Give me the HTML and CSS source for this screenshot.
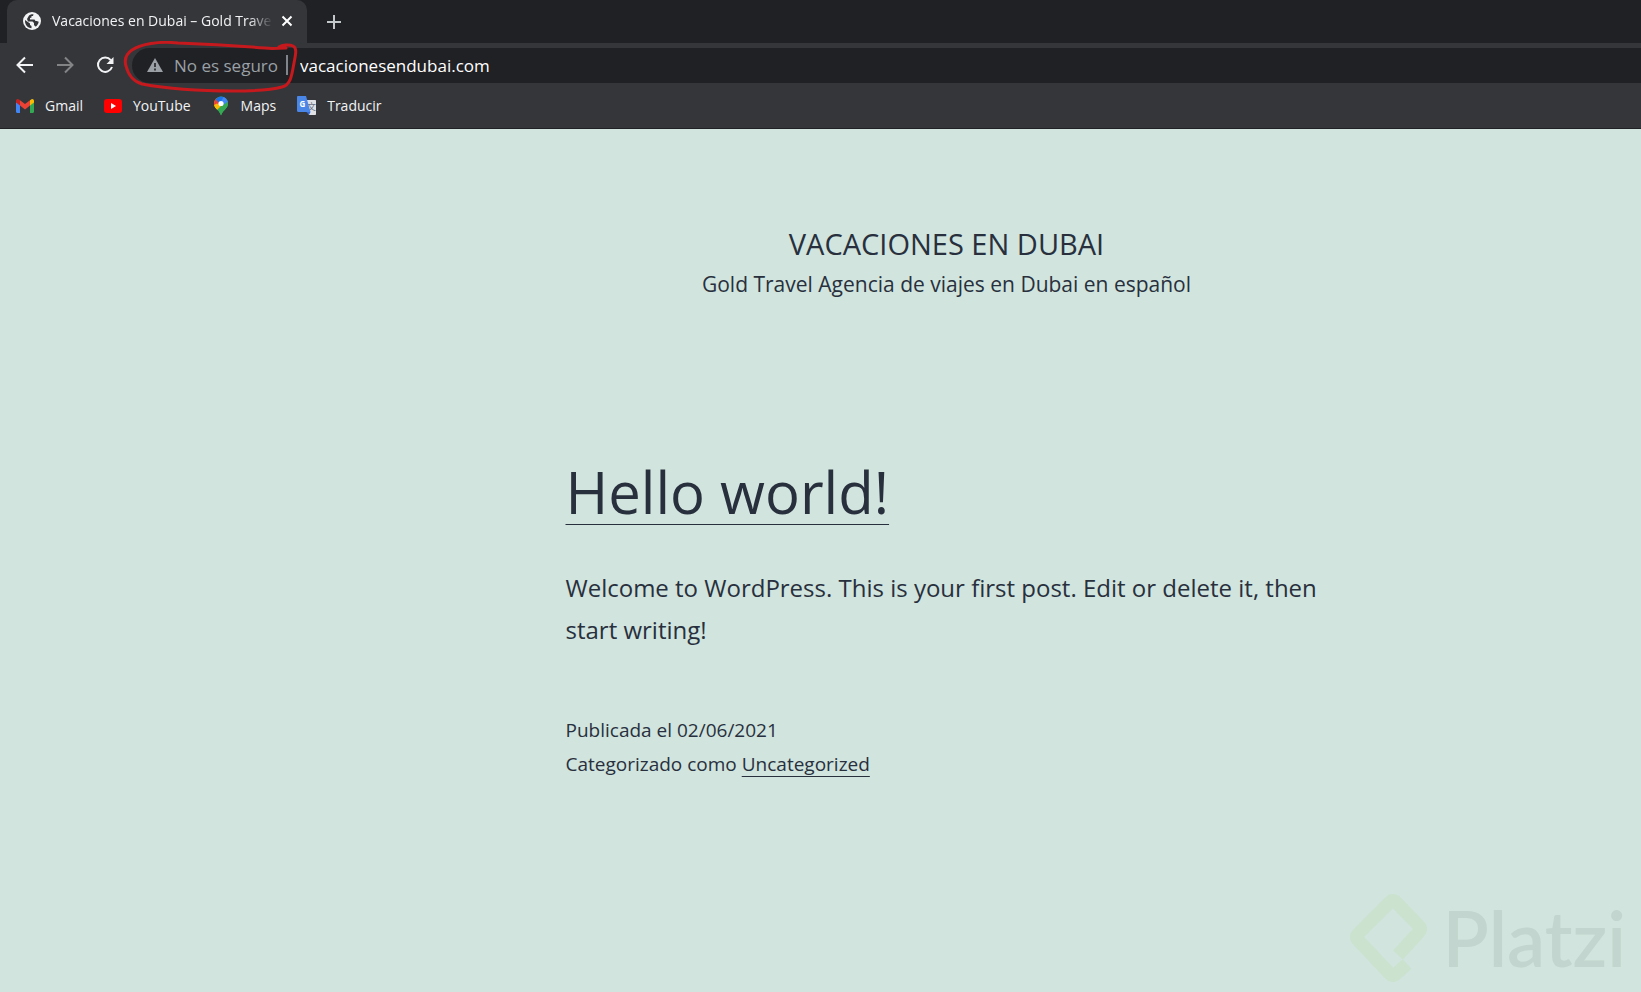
FILE: index.html
```html
<!DOCTYPE html>
<html lang="es">
<head>
  <meta charset="UTF-8">
  <meta name="viewport" content="width=device-width, initial-scale=1.0">
  <title>Vacaciones en Dubai – Gold Travel</title>
  <link rel="stylesheet" href="styles.css">
</head>
<body>
  <header class="browser">
    <div class="tab-strip">
      <div class="tab">
        <svg class="favicon" viewBox="0 0 18 18" aria-hidden="true">
          <circle cx="9" cy="9" r="9" fill="#f1f3f4"/>
          <path d="M2 8l5 3.500v1.500l1.500 1v2.200C4.800 16 2 13 2 9zM6 3.500C7.500 2.300 9 2 10.500 2.200L10 4H8.500v1.500L7 6v1.500h4.500l1 1.500h1.200l2 .8c-.3 2-1.400 3.800-3 4.900l-1-1.200H11V11L9.500 9.500H5L4 7z" fill="#35363a"/>
        </svg>
        <span class="tab-title">Vacaciones en Dubai – Gold Trave</span>
        <button class="icon-btn tab-close" aria-label="Cerrar">
          <svg width="12" height="12" viewBox="0 0 12 12"><path d="M1.500 1.500l9 9M10.500 1.500l-9 9" stroke="#fff" stroke-width="2"/></svg>
        </button>
      </div>
      <button class="icon-btn new-tab" aria-label="Nueva pestaña">
        <svg width="16" height="16" viewBox="0 0 16 16"><path d="M8 1v14M1 8h14" stroke="#c4c7ca" stroke-width="2"/></svg>
      </button>
    </div>

    <div class="toolbar">
      <nav class="nav-buttons">
        <button class="icon-btn" aria-label="Atrás">
          <svg width="18" height="18" viewBox="0 0 18 18"><path d="M17 9H2M9 1.500L1.500 9 9 16.500" fill="none" stroke="#f1f3f4" stroke-width="2"/></svg>
        </button>
        <button class="icon-btn" aria-label="Adelante">
          <svg width="18" height="18" viewBox="0 0 18 18"><path d="M1 9h15M9 1.500L16.500 9 9 16.500" fill="none" stroke="#838486" stroke-width="2"/></svg>
        </button>
        <button class="icon-btn" aria-label="Recargar">
          <svg width="18" height="18" viewBox="0 0 18 18"><path d="M14.800 4.200A7.200 7.200 0 1 0 16 11" fill="none" stroke="#f1f3f4" stroke-width="2"/><path d="M17.500 1v7h-7z" fill="#f1f3f4"/></svg>
        </button>
      </nav>
      <div class="omnibox">
        <button class="security">
          <svg width="16" height="14" viewBox="0 0 16 14"><path d="M8 0l8 14H0z" fill="#9aa0a6"/><path d="M8 5v4M8 10.500v2" stroke="#202124" stroke-width="1.600"/></svg>
          No es seguro
        </button>
        <input class="url" type="text" aria-label="Dirección" value="vacacionesendubai.com">
      </div>
      <svg class="marker" viewBox="0 0 176 54" aria-hidden="true">
        <path d="M163 7C155 7 150 8 142 7C115 5 80 3 55 2C35 0 18 3 9 9C3 13 1 18 3 25C5 33 9 40 19 43C35 46 70 50 110 50C130 50 148 49 159 46C168 44 169 33 171 22C173 12 174 7 170 5C166 3 159 4 156 6" fill="none" stroke="#c6191d" stroke-width="3" stroke-linecap="round"/>
      </svg>
    </div>

    <nav class="bookmarks">
      <a href="#">
        <svg width="18" height="14" viewBox="0 0 18 14"><path d="M0 2v10.800C0 13.500.5 14 1.200 14H4V6z" fill="#4285f4"/><path d="M14 6v8h2.800c.7 0 1.200-.5 1.200-1.200V2z" fill="#34a853"/><path d="M14 1.300V6.600l4-3V2c0-1.800-1.900-2.500-3.200-1.300z" fill="#fbbc04"/><path d="M4 6.600V1.300L9 5l5-3.700v5.300l-5 3.800z" fill="#ea4335"/><path d="M0 2v1.600l4 3V1.300L3.200.7C1.900-.5 0 .2 0 2z" fill="#c5221f"/></svg>
        Gmail
      </a>
      <a href="#">
        <svg width="18" height="14" viewBox="0 0 18 14"><rect width="18" height="14" rx="3" fill="#f00"/><path d="M7 4l5 3-5 3z" fill="#fff"/></svg>
        YouTube
      </a>
      <a href="#">
        <svg width="18" height="20" viewBox="0 0 18 20">
          <clipPath id="pin"><path d="M9 .5a7 7 0 0 1 7 7c0 5-5 6-7 12C7 13.500 2 12.500 2 7.500a7 7 0 0 1 7-7z"/></clipPath>
          <g clip-path="url(#pin)"><path d="M0 0h18v20H0z" fill="#34a853"/><path d="M0 5l9 2.500L4 14H0z" fill="#fbbc04"/><path d="M0 1.500h3.600L9 6 4 11 1 8z" fill="#ea4335"/><path d="M3.600 3.200L9 -1l5 2-6 7z" fill="#1a73e8"/><path d="M12 0L7.500 8.500 9 10l9-5V0z" fill="#4285f4"/><path d="M17 4L4 19h14z" fill="#34a853"/><path d="M1 9.500l4 -2 4 2.500-5 5z" fill="#fbbc04"/></g>
          <circle cx="9" cy="7.500" r="2.600" fill="#fff"/>
        </svg>
        Maps
      </a>
      <a href="#">
        <svg width="19" height="19" viewBox="0 0 19 19"><path d="M8 4h10c.6 0 1 .4 1 1v13c0 .6-.4 1-1 1h-6z" fill="#dfe1e5"/><text x="10" y="14" class="han">文</text><path d="M1.200 0H9l4.500 16H1.200C.5 16 0 15.500 0 14.800V1.200C0 .5.500 0 1.200 0z" fill="#4a86e8"/><path d="M9.500 16h4L12 19z" fill="#3367d6"/><text x="2.500" y="11" class="gee">G</text></svg>
        Traducir
      </a>
    </nav>
  </header>

  <div class="site">
    <header class="site-header">
      <h1 class="site-title">Vacaciones en Dubai</h1>
      <p class="site-description">Gold Travel Agencia de viajes en Dubai en español</p>
    </header>

    <main>
      <article class="post">
        <h2 class="entry-title"><a href="#">Hello world!</a></h2>
        <p class="entry-content">Welcome to WordPress. This is your first post. Edit or delete it, then start writing!</p>
        <footer class="entry-footer">
          <div>Publicada el 02/06/2021</div>
          <div>Categorizado como <a href="#">Uncategorized</a></div>
        </footer>
      </article>
    </main>

    <div class="watermark">
      <svg width="78" height="92" viewBox="0 0 78 92" aria-hidden="true"><path d="M48 63L69 40Q72 37 69 34L46 10Q43 7 40 10L8 42Q5 45 8 48L40 82Q43 85 46 82L57 72" class="mark"/></svg>
      <span>Platzi</span>
    </div>
  </div>
</body>
</html>
```
FILE: styles.css
```css
* {
  box-sizing: border-box;
}

body {
  margin: 0;
  min-height: 100vh;
  display: flex;
  flex-direction: column;
  font-family: "Open Sans", "Noto Sans", sans-serif;
  background: #d1e4dd;
}

/* Browser window */
.browser {
  background: #35363a;
  color: #f1f3f4;
  font-size: 14px;
  border-bottom: 1px solid #202124;
}

.tab-strip {
  display: flex;
  align-items: center;
  height: 43px;
  padding-left: 7px;
  background: #202124;
}

.tab {
  display: flex;
  align-items: center;
  width: 300px;
  height: 43px;
  padding: 0 14px 2px 16px;
  background: #35363a;
  border-radius: 10px 10px 0 0;
}

.favicon {
  width: 18px;
  height: 18px;
  margin-right: 11px;
}

.tab-title {
  flex: 1;
  overflow: hidden;
  white-space: nowrap;
  mask-image: linear-gradient(to left, transparent, #000 24px);
}

.icon-btn {
  display: flex;
  padding: 0;
  background: none;
  border: none;
  cursor: pointer;
}

.tab-close {
  margin-left: 8px;
}

.new-tab {
  margin-left: 19px;
}

.toolbar {
  position: relative;
  display: flex;
  align-items: center;
  height: 44px;
  padding-left: 16px;
}

.nav-buttons {
  display: flex;
  gap: 22px;
  margin-right: 18px;
}

.omnibox {
  flex: 1;
  display: flex;
  align-items: center;
  height: 35px;
  padding-left: 15px;
  background: #202124;
  border-radius: 18px 0 0 18px;
}

.security {
  display: flex;
  align-items: center;
  gap: 11px;
  height: 20px;
  padding: 0 8px 0 0;
  background: none;
  border: none;
  border-right: 2px solid #80868b;
  color: #9aa0a6;
  font: inherit;
  font-size: 17px;
}

.url {
  flex: 1;
  padding: 0 12px;
  background: none;
  border: none;
  outline: none;
  color: #fff;
  font: inherit;
  font-size: 17px;
}

.marker {
  position: absolute;
  left: 123px;
  top: -2px;
  z-index: 1;
  width: 176px;
  height: 54px;
}

.bookmarks {
  display: flex;
  align-items: center;
  gap: 21px;
  height: 41px;
  padding: 0 16px 4px;
}

.bookmarks a {
  display: flex;
  align-items: center;
  gap: 11px;
  color: inherit;
  text-decoration: none;
}

.gee {
  fill: #fff;
  font: bold 8px "Open Sans", sans-serif;
}

.han {
  fill: #6b7280;
  font: 9px "Noto Sans CJK SC", sans-serif;
}

/* Blog page */
.site {
  position: relative;
  flex: 1;
  padding: 91px 0 0 252px;
  background: #d1e4dd;
  color: #28303d;
}

.site-header {
  text-align: center;
}

.site-title {
  margin: 0;
  font-size: 29px;
  font-weight: 400;
  line-height: 48px;
  text-transform: uppercase;
}

.site-description {
  margin: 0;
  font-size: 21px;
  line-height: 32px;
}

.post {
  max-width: 762px;
  margin: 152px auto 0;
}

.entry-title {
  margin: 0 0 35px;
  font-size: 58px;
  font-weight: 400;
  line-height: 80px;
}

.post a {
  color: inherit;
  text-decoration: underline;
  text-decoration-thickness: 1px;
  text-decoration-skip-ink: none;
  text-underline-offset: 5px;
}

.post .entry-title a {
  text-underline-offset: 10px;
}

.entry-content {
  margin: 0 0 62px;
  font-size: 24px;
  line-height: 42px;
}

.entry-footer {
  font-size: 19px;
  line-height: 34px;
}

.watermark {
  position: absolute;
  right: 15px;
  bottom: 8px;
  display: flex;
  align-items: center;
  gap: 14px;
  color: #c2d5ce;
  font: 600 76px/92px Lato, sans-serif;
}

.mark {
  fill: none;
  stroke: #cbe2ce;
  stroke-width: 13;
  stroke-linejoin: round;
}
```
